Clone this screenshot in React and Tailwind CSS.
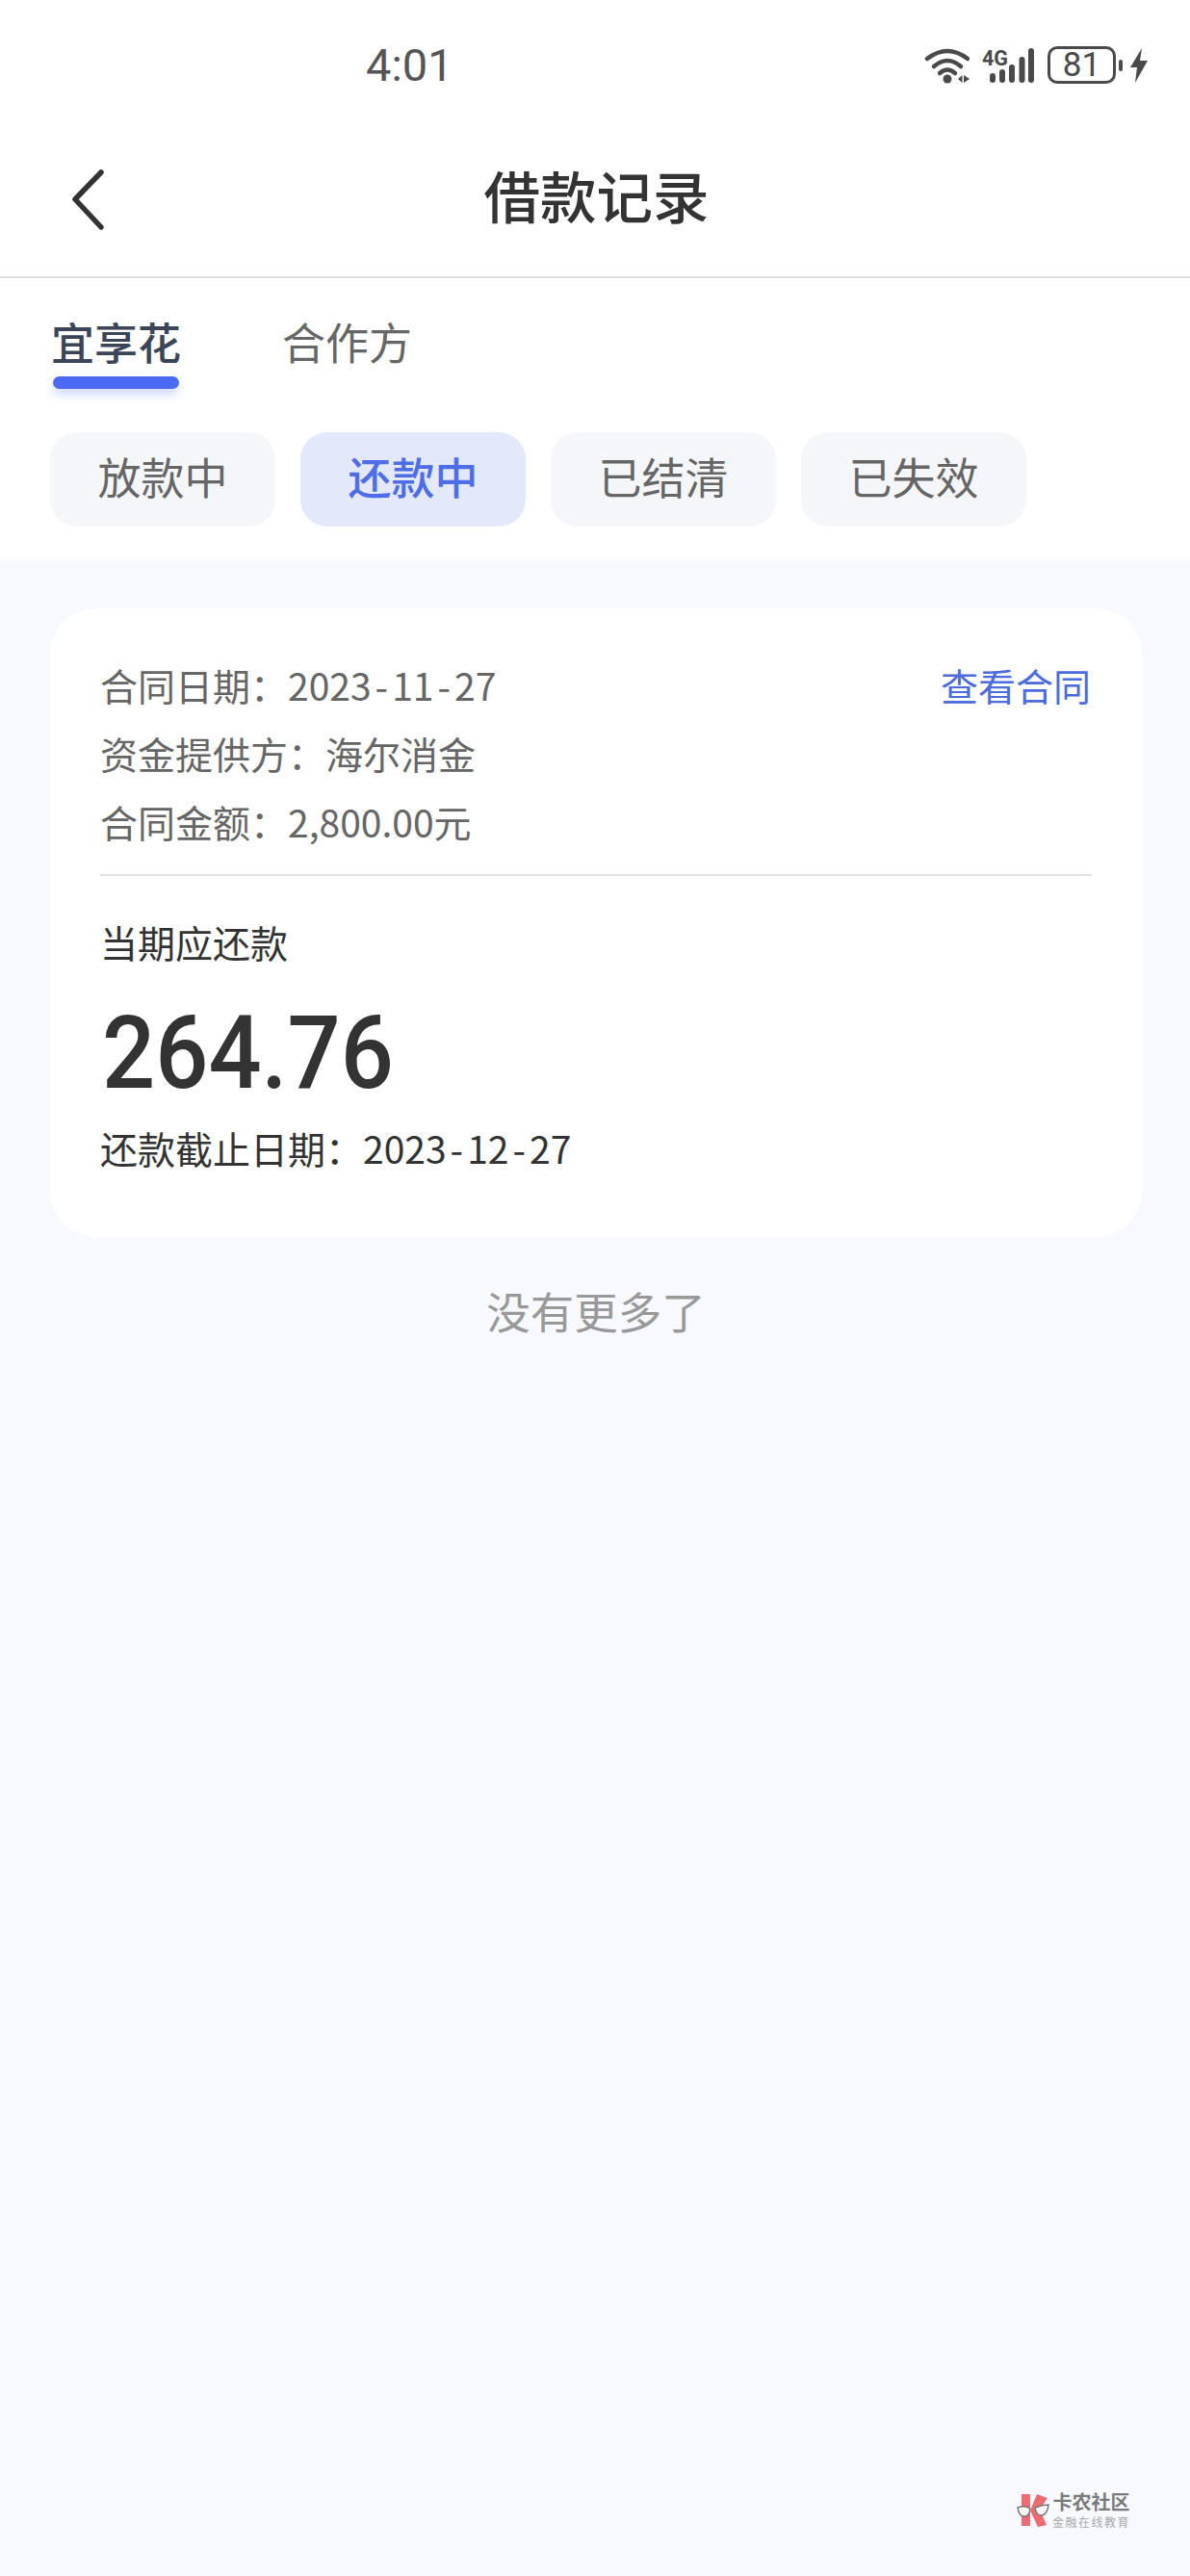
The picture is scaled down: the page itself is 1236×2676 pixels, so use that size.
import React from "react";

const pills = ["放款中", "还款中", "已结清", "已失效"];

// the hyphens in the reference dates sit wider than the font's own
const DateText = ({ value }) => (
  <>
    {value.split("-").map((part, i) => (
      <React.Fragment key={i}>
        {i > 0 && <span className="mx-[4px]">-</span>}
        {part}
      </React.Fragment>
    ))}
  </>
);

const StatusIcons = () => (
  <div className="mt-[8px] flex h-[39px] items-center">
    {/* wifi */}
    <svg width="47" height="38" viewBox="0 0 47 38" fill="none" stroke="#4a4a4a" strokeLinecap="round">
      <path d="M3 12Q24 -4 45 12" strokeWidth="4.500" />
      <path d="M10 20Q24 8 38 20" strokeWidth="4.500" />
      <path d="M16 27Q24 20 32 27" strokeWidth="4.500" />
      <circle cx="24" cy="33" r="4.500" fill="#4a4a4a" stroke="none" />
      <path d="M35 33L39.500 29V37ZM41 29V37L47 33Z" fill="#4a4a4a" stroke="none" />
    </svg>
    {/* signal */}
    <svg width="55" height="38" viewBox="0 0 55 38" className="ml-[13px]" fill="none">
      <text x="0" y="19" fontFamily="'Roboto', sans-serif" fontWeight="700" fontSize="22" fill="#4a4a4a" textLength="27" lengthAdjust="spacingAndGlyphs">4G</text>
      <g stroke="#4a4a4a" strokeWidth="6" strokeLinecap="round">
        <path d="M11 30V34" />
        <path d="M21 26V34" />
        <path d="M31 21V34" />
        <path d="M41.500 13V34" />
        <path d="M51 4V34" />
      </g>
    </svg>
    {/* battery */}
    <div className="ml-[13px] flex h-[39px] w-[71px] items-center justify-center rounded-[10px] border-[3px] border-[#4a4a4a] font-['Roboto',sans-serif] text-[35px] leading-none text-[#4a4a4a]">
      81
    </div>
    <div className="ml-[3px] h-[12px] w-[4px] rounded-[2px] bg-[#4a4a4a]"></div>
    <svg width="18" height="36" viewBox="0 0 18 36" className="ml-[8px]">
      <path d="M12 0L0 20H7L5 36L18 13H10Z" fill="#4a4a4a" />
    </svg>
  </div>
);

const Watermark = () => (
  <div className="absolute left-[1056px] top-[2589px] flex items-center">
    <svg width="34" height="36" viewBox="0 0 34 36">
      <path d="M5 1H14V34H5Z" fill="#ee6b72" />
      <path d="M21 1L32 5L24 17L31 33L22 35L14 18Z" fill="#ee6b72" />
      <path d="M1 15Q8 12 14 16Q13 25 7 24Q2 23 1 15ZM19 15Q26 12 33 12Q32 22 26 23Q20 23 19 15Z" fill="#f8f8f8" stroke="#777" strokeWidth="1.500" />
    </svg>
    <div className="ml-[3px] flex flex-col items-center gap-[5px] font-['Noto_Sans_CJK_SC',sans-serif]">
      <span className="text-[20px] font-bold leading-[20px] text-[#7a7a7a]">卡农社区</span>
      <span className="text-[12px] leading-[12px] tracking-[1.500px] text-[#a8a8a8]">金融在线教育</span>
    </div>
  </div>
);

export default function App() {
  return (
    <div className="relative flex h-[2676px] w-[1236px] flex-col overflow-hidden bg-[#f7f9ff] font-['Noto_Sans_CJK_SC',sans-serif]">
      <div className="bg-white">
        {/* status bar */}
        <div className="flex h-[134px] items-start justify-between pl-[380px] pr-[44px] pt-[40px]">
          <span className="font-['Roboto',sans-serif] text-[47px] leading-[56px] text-[#555555]">4:01</span>
          <StatusIcons />
        </div>

        {/* header */}
        <div className="relative flex h-[155px] items-center justify-center border-b-2 border-[#dfdfdf] pb-[16px] pl-[3px]">
          <svg width="36" height="64" viewBox="0 0 36 64" className="absolute left-[74px] top-[42px]" fill="none" stroke="#333333" strokeWidth="5.500" strokeLinecap="round" strokeLinejoin="round">
            <path d="M31 3L4 31L31 60" />
          </svg>
          <h1 className="text-[58.500px] font-medium leading-none text-[#333333]">借款记录</h1>
        </div>

        {/* tabs */}
        <div className="flex gap-[105px] pl-[53px] pt-[36px]">
          <div className="flex flex-col">
            <span className="text-[45px] font-medium leading-[60px] text-[#3c4558]">宜享花</span>
            <div className="ml-[2px] mt-[6px] h-[13px] w-[131px] rounded-full bg-[#4c6bf5] shadow-[0_6px_10px_rgba(76,107,245,0.25)]"></div>
          </div>
          <span className="text-[45px] leading-[60px] text-[#666666]">合作方</span>
        </div>

        {/* status filters */}
        <div className="flex gap-[26px] pb-[34px] pl-[52px] pt-[45px]">
          {pills.map((label, i) => (
            <div
              key={label}
              className={
                i === 1
                  ? "flex h-[98px] w-[234px] items-center justify-center rounded-[28px] bg-[#e3e9fb] pb-[6px] text-[45px] font-medium text-[#4f6de6]"
                  : "flex h-[98px] w-[234px] items-center justify-center rounded-[28px] bg-[#f5f6fa] pb-[6px] text-[45px] text-[#666666]"
              }
            >
              {label}
            </div>
          ))}
        </div>
      </div>

      {/* contract card */}
      <div className="ml-[52px] mr-[50px] mt-[51px] h-[653px] rounded-[48px] bg-white px-[52px] pt-[43px]">
        <div className="flex items-center justify-between text-[39px] leading-[72px] text-[#666666]">
          <span>合同日期：<DateText value="2023-11-27" /></span>
          <span className="mr-[1px] text-[#4c6bdc]">查看合同</span>
        </div>
        <div className="text-[39px] leading-[71px] text-[#666666]">资金提供方：海尔消金</div>
        <div className="text-[39px] leading-[71px] text-[#666666]">合同金额：2,800.00元</div>
        <div className="mt-[19px] h-[2px] bg-[#e2e2e2]"></div>
        <div className="mt-[40px] text-[39px] leading-[56px] text-[#333333]">当期应还款</div>
        {/* no DIN-like face installed, so Roboto is squeezed to the same width */}
        <div className="ml-[2px] mt-[30px] origin-left scale-x-[0.925] font-['Roboto',sans-serif] text-[105px] font-medium leading-[118px] text-[#333333]">264.76</div>
        <div className="mt-[10px] text-[39px] leading-[56px] text-[#333333]">还款截止日期：<DateText value="2023-12-27" /></div>
      </div>

      <div className="mt-[44px] pl-[2px] text-center text-[45.500px] leading-[64px] text-[#999999]">没有更多了</div>

      <Watermark />
    </div>
  );
}
